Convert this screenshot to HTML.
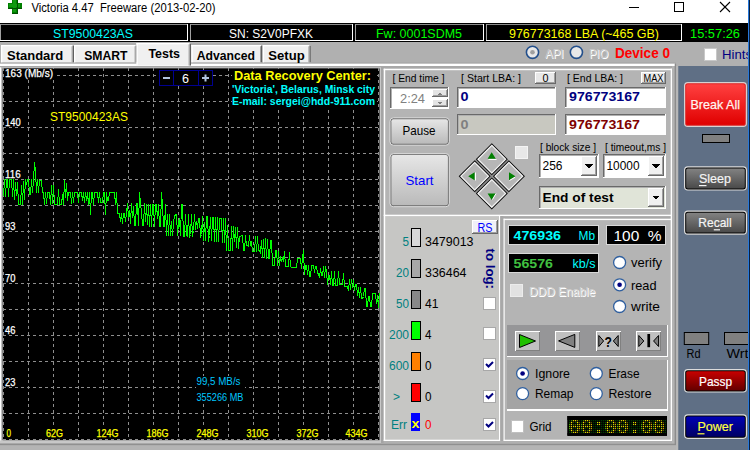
<!DOCTYPE html>
<html lang="en"><head><meta charset="utf-8"><title>Victoria 4.47 Freeware (2013-02-20)</title>
<style>
html,body{margin:0;padding:0;background:#ababab;}
body{width:750px;height:450px;overflow:hidden;}
svg{display:block;font-family:'Liberation Sans', Arial, sans-serif;}
svg text{white-space:pre;}
</style></head><body>
<svg width="750" height="450" viewBox="0 0 750 450">
<rect x="0" y="0" width="750" height="450" fill="#ababab" />
<rect x="0" y="0" width="750" height="23" fill="#ffffff" />
<rect x="0" y="23" width="750" height="19" fill="#000000" />
<g shape-rendering="crispEdges">
<rect x="12" y="0" width="6" height="14" fill="#008000" />
<rect x="8" y="3" width="14" height="6" fill="#008000" />
<rect x="13" y="0" width="3" height="12" fill="#109a10" />
<rect x="9" y="4" width="11" height="3" fill="#109a10" />
<rect x="17" y="0" width="1" height="14" fill="#005000" />
<rect x="8" y="8" width="14" height="1" fill="#005000" />
<rect x="12" y="13" width="6" height="1" fill="#005000" />
</g>
<text x="31.4" y="12" font-size="12" fill="#000" textLength="184" lengthAdjust="spacingAndGlyphs" xml:space="preserve">Victoria 4.47  Freeware (2013-02-20)</text>
<g stroke="#000" stroke-width="1" fill="none" shape-rendering="crispEdges">
<line x1="629" y1="7.5" x2="639" y2="7.5"/>
<rect x="674.5" y="2.5" width="9" height="9"/>
</g>
<g stroke="#000" stroke-width="1.1" fill="none"><line x1="720" y1="2" x2="730" y2="12"/><line x1="730" y1="2" x2="720" y2="12"/></g>
<g shape-rendering="crispEdges">
<rect x="0" y="24" width="188" height="1" fill="#8c8c8c" />
<rect x="0" y="24" width="1" height="17" fill="#a0a0a0" />
<rect x="0" y="40" width="188" height="1" fill="#ffffff" />
<rect x="187" y="24" width="1" height="17" fill="#ffffff" />
<rect x="190" y="24" width="163" height="1" fill="#8c8c8c" />
<rect x="190" y="24" width="1" height="17" fill="#a0a0a0" />
<rect x="190" y="40" width="163" height="1" fill="#ffffff" />
<rect x="352" y="24" width="1" height="17" fill="#ffffff" />
<rect x="355" y="24" width="129" height="1" fill="#8c8c8c" />
<rect x="355" y="24" width="1" height="17" fill="#a0a0a0" />
<rect x="355" y="40" width="129" height="1" fill="#ffffff" />
<rect x="483" y="24" width="1" height="17" fill="#ffffff" />
<rect x="486" y="24" width="196" height="1" fill="#8c8c8c" />
<rect x="486" y="24" width="1" height="17" fill="#a0a0a0" />
<rect x="486" y="40" width="196" height="1" fill="#ffffff" />
<rect x="681" y="24" width="1" height="17" fill="#ffffff" />
</g>
<text x="53" y="37.7" font-size="13.2" fill="#00ffff" textLength="80" lengthAdjust="spacingAndGlyphs" >ST9500423AS</text>
<text x="229" y="37.7" font-size="13.2" fill="#ffffff" textLength="84" lengthAdjust="spacingAndGlyphs" >SN: S2V0PFXK</text>
<text x="376" y="37.7" font-size="13.2" fill="#00ff00" textLength="86" lengthAdjust="spacingAndGlyphs" >Fw: 0001SDM5</text>
<text x="509" y="37.7" font-size="13.2" fill="#ffff00" textLength="150" lengthAdjust="spacingAndGlyphs" >976773168 LBA (~465 GB)</text>
<text x="690" y="37.7" font-size="13.2" fill="#00ff00" textLength="50" lengthAdjust="spacingAndGlyphs" >15:57:26</text>
<rect x="0" y="42" width="750" height="24" fill="#b0b0b0" />
<rect x="0" y="62.3" width="676" height="1.4" fill="#a8a8a8" />
<rect x="0" y="63.7" width="675" height="2.3" fill="#ffffff" />
<rect x="0" y="66" width="676" height="2" fill="#a8a8a8" />
<rect x="1" y="45" width="73" height="17.299999999999997" fill="#f0f0f0" />
<rect x="1" y="45" width="71.5" height="1.3" fill="#ffffff" />
<rect x="1" y="45" width="1.3" height="17.299999999999997" fill="#ffffff" />
<rect x="72.6" y="45.5" width="1.4" height="16.799999999999997" fill="#606060" />
<rect x="71.6" y="46.3" width="1" height="15.999999999999996" fill="#a0a0a0" />
<text x="7" y="59.7" font-size="12.5" fill="#000" font-weight="bold" textLength="56.3" lengthAdjust="spacingAndGlyphs" >Standard</text>
<rect x="74" y="45" width="63" height="17.299999999999997" fill="#f0f0f0" />
<rect x="74" y="45" width="61.5" height="1.3" fill="#ffffff" />
<rect x="74" y="45" width="1.3" height="17.299999999999997" fill="#ffffff" />
<rect x="135.6" y="45.5" width="1.4" height="16.799999999999997" fill="#606060" />
<rect x="134.6" y="46.3" width="1" height="15.999999999999996" fill="#a0a0a0" />
<text x="84.2" y="59.7" font-size="12.5" fill="#000" font-weight="bold" textLength="43.3" lengthAdjust="spacingAndGlyphs" >SMART</text>
<rect x="191.4" y="45" width="70.99999999999997" height="17.299999999999997" fill="#f0f0f0" />
<rect x="191.4" y="45" width="69.49999999999997" height="1.3" fill="#ffffff" />
<rect x="191.4" y="45" width="1.3" height="17.299999999999997" fill="#ffffff" />
<rect x="261.0" y="45.5" width="1.4" height="16.799999999999997" fill="#606060" />
<rect x="260.0" y="46.3" width="1" height="15.999999999999996" fill="#a0a0a0" />
<text x="196.7" y="59.7" font-size="12.5" fill="#000" font-weight="bold" textLength="58.3" lengthAdjust="spacingAndGlyphs" >Advanced</text>
<rect x="262.8" y="45" width="48.0" height="17.299999999999997" fill="#f0f0f0" />
<rect x="262.8" y="45" width="46.5" height="1.3" fill="#ffffff" />
<rect x="262.8" y="45" width="1.3" height="17.299999999999997" fill="#ffffff" />
<rect x="309.40000000000003" y="45.5" width="1.4" height="16.799999999999997" fill="#606060" />
<rect x="308.40000000000003" y="46.3" width="1" height="15.999999999999996" fill="#a0a0a0" />
<text x="268.3" y="59.7" font-size="12.5" fill="#000" font-weight="bold" textLength="36.4" lengthAdjust="spacingAndGlyphs" >Setup</text>
<rect x="136.5" y="43" width="54.5" height="22.5" fill="#f0f0f0" />
<rect x="136.5" y="43" width="53.0" height="1.3" fill="#ffffff" />
<rect x="136.5" y="43" width="1.3" height="22.5" fill="#ffffff" />
<rect x="189.6" y="43.5" width="1.4" height="22.0" fill="#606060" />
<rect x="188.6" y="44.3" width="1" height="21.2" fill="#a0a0a0" />
<text x="148.4" y="57.5" font-size="12.5" fill="#000" font-weight="bold" textLength="31.6" lengthAdjust="spacingAndGlyphs" >Tests</text>
<circle cx="532.5" cy="52.3" r="6.1" fill="#e8e8e8" stroke="#24508c" stroke-width="1.6"/>
<circle cx="532.5" cy="52.3" r="2.3" fill="#a0a0a0"/>
<circle cx="576.4" cy="52.3" r="6.1" fill="#e8e8e8" stroke="#24508c" stroke-width="1.6"/>
<text x="546" y="59" font-size="12" fill="#ffffff" textLength="18.5" lengthAdjust="spacingAndGlyphs" >API</text>
<text x="545" y="58" font-size="12" fill="#c8c8c8" textLength="18.5" lengthAdjust="spacingAndGlyphs" >API</text>
<text x="590" y="59" font-size="12" fill="#ffffff" textLength="19" lengthAdjust="spacingAndGlyphs" >PIO</text>
<text x="589" y="58" font-size="12" fill="#c8c8c8" textLength="19" lengthAdjust="spacingAndGlyphs" >PIO</text>
<text x="615" y="58" font-size="14" fill="#ff0000" font-weight="bold" textLength="55" lengthAdjust="spacingAndGlyphs" >Device 0</text>
<rect x="704.5" y="48.5" width="12" height="12" fill="#ffffff" stroke="#c8c8c8"/>
<text x="722" y="59" font-size="13" fill="#000080" textLength="30" lengthAdjust="spacingAndGlyphs" >Hints</text>
<rect x="0" y="67.3" width="1.3" height="376" fill="#ffffff" />
<rect x="1.3" y="67.3" width="1.5" height="376" fill="#c0c0c0" />
<rect x="2.7" y="67.3" width="378" height="1.2" fill="#c0c0c0" />
<rect x="2.7" y="68.4" width="377" height="372" fill="#000000" />
<rect x="0" y="440.3" width="381" height="2.7" fill="#c8c8c8" />
<rect x="379.7" y="67.3" width="1.3" height="375.7" fill="#c8c8c8" />
<rect x="381" y="67.3" width="2.7" height="376" fill="#a4a4a4" />
<rect x="0" y="443" width="676" height="1" fill="#b0b0b0" />
<rect x="0" y="443.8" width="676" height="1.5" fill="#909090" />
<rect x="0" y="445.3" width="678" height="4.7" fill="#b4b4b4" />
<g stroke="#8e8e8e" stroke-width="1" stroke-dasharray="3 3" shape-rendering="crispEdges">
<line x1="3" y1="75.5" x2="379.7" y2="75.5"/>
<line x1="3" y1="101.5" x2="379.7" y2="101.5"/>
<line x1="3" y1="127.5" x2="379.7" y2="127.5"/>
<line x1="3" y1="153.5" x2="379.7" y2="153.5"/>
<line x1="3" y1="179.5" x2="379.7" y2="179.5"/>
<line x1="3" y1="205.5" x2="379.7" y2="205.5"/>
<line x1="3" y1="231.5" x2="379.7" y2="231.5"/>
<line x1="3" y1="257.5" x2="379.7" y2="257.5"/>
<line x1="3" y1="283.5" x2="379.7" y2="283.5"/>
<line x1="3" y1="309.5" x2="379.7" y2="309.5"/>
<line x1="3" y1="335.5" x2="379.7" y2="335.5"/>
<line x1="3" y1="361.5" x2="379.7" y2="361.5"/>
<line x1="3" y1="387.5" x2="379.7" y2="387.5"/>
<line x1="3" y1="413.5" x2="379.7" y2="413.5"/>
<line x1="3" y1="439.5" x2="379.7" y2="439.5"/>
<line x1="3.5" y1="68" x2="3.5" y2="440.3"/>
<line x1="28.5" y1="68" x2="28.5" y2="440.3"/>
<line x1="53.5" y1="68" x2="53.5" y2="440.3"/>
<line x1="78.5" y1="68" x2="78.5" y2="440.3"/>
<line x1="103.5" y1="68" x2="103.5" y2="440.3"/>
<line x1="128.5" y1="68" x2="128.5" y2="440.3"/>
<line x1="153.5" y1="68" x2="153.5" y2="440.3"/>
<line x1="178.5" y1="68" x2="178.5" y2="440.3"/>
<line x1="203.5" y1="68" x2="203.5" y2="440.3"/>
<line x1="228.5" y1="68" x2="228.5" y2="440.3"/>
<line x1="253.5" y1="68" x2="253.5" y2="440.3"/>
<line x1="278.5" y1="68" x2="278.5" y2="440.3"/>
<line x1="303.5" y1="68" x2="303.5" y2="440.3"/>
<line x1="328.5" y1="68" x2="328.5" y2="440.3"/>
<line x1="353.5" y1="68" x2="353.5" y2="440.3"/>
<line x1="378.5" y1="68" x2="378.5" y2="440.3"/>
</g>
<polyline points="3.5,196.5 4.5,179.5 5.5,196.5 6.5,179.5 7.5,179.5 8.5,196.5 9.5,179.5 10.5,179.5 11.5,179.5 12.5,196.5 13.5,179.5 14.5,199.5 15.5,182.5 16.5,195.5 17.5,182.5 18.5,204.5 19.5,204.5 20.5,204.5 21.5,185.5 22.5,204.5 23.5,181.5 24.5,199.5 25.5,179.5 26.5,184.5 27.5,179.5 28.5,179.5 29.5,194.5 30.5,194.5 31.5,179.5 32.5,192.5 33.5,179.5 34.5,162.5 35.5,170.5 36.5,192.5 37.5,179.5 38.5,192.5 39.5,180.5 40.5,180.5 41.5,180.5 42.5,192.5 43.5,192.5 44.5,204.5 45.5,192.5 46.5,203.5 47.5,192.5 48.5,192.5 49.5,192.5 50.5,204.5 51.5,185.5 52.5,203.5 53.5,185.5 54.5,204.5 55.5,204.5 56.5,204.5 57.5,204.5 58.5,189.5 59.5,204.5 60.5,204.5 61.5,204.5 62.5,194.5 63.5,204.5 64.5,180.5 65.5,197.5 66.5,183.5 67.5,200.5 68.5,192.5 69.5,192.5 70.5,192.5 71.5,203.5 72.5,192.5 73.5,202.5 74.5,192.5 75.5,192.5 76.5,192.5 77.5,192.5 78.5,202.5 79.5,192.5 80.5,192.5 81.5,192.5 82.5,200.5 83.5,192.5 84.5,202.5 85.5,192.5 86.5,200.5 87.5,192.5 88.5,204.5 89.5,192.5 90.5,214.5 91.5,192.5 92.5,192.5 93.5,204.5 94.5,192.5 95.5,192.5 96.5,192.5 97.5,192.5 98.5,202.5 99.5,192.5 100.5,202.5 101.5,202.5 102.5,202.5 103.5,192.5 104.5,192.5 105.5,214.5 106.5,192.5 107.5,200.5 108.5,200.5 109.5,192.5 110.5,192.5 111.5,192.5 112.5,192.5 113.5,192.5 114.5,192.5 115.5,204.5 116.5,192.5 117.5,213.5 118.5,213.5 119.5,213.5 120.5,221.5 121.5,213.5 122.5,223.5 123.5,213.5 124.5,213.5 125.5,221.5 126.5,213.5 127.5,203.5 128.5,217.5 129.5,210.5 130.5,223.5 131.5,203.5 132.5,217.5 133.5,206.5 134.5,225.5 135.5,225.5 136.5,203.5 137.5,203.5 138.5,225.5 139.5,192.5 140.5,203.5 141.5,211.5 142.5,225.5 143.5,225.5 144.5,203.5 145.5,221.5 146.5,204.5 147.5,224.5 148.5,204.5 149.5,226.5 150.5,204.5 151.5,226.5 152.5,204.5 153.5,204.5 154.5,226.5 155.5,204.5 156.5,204.5 157.5,218.5 158.5,204.5 159.5,226.5 160.5,226.5 161.5,192.5 162.5,204.5 163.5,226.5 164.5,226.5 165.5,204.5 166.5,235.5 167.5,214.5 168.5,235.5 169.5,214.5 170.5,235.5 171.5,221.5 172.5,235.5 173.5,222.5 174.5,216.5 175.5,214.5 176.5,214.5 177.5,235.5 178.5,222.5 179.5,218.5 180.5,235.5 181.5,204.5 182.5,204.5 183.5,236.5 184.5,236.5 185.5,214.5 186.5,235.5 187.5,236.5 188.5,214.5 189.5,236.5 190.5,234.5 191.5,214.5 192.5,236.5 193.5,230.5 194.5,214.5 195.5,229.5 196.5,221.5 197.5,228.5 198.5,218.5 199.5,218.5 200.5,236.5 201.5,234.5 202.5,216.5 203.5,240.5 204.5,222.5 205.5,240.5 206.5,216.5 207.5,216.5 208.5,241.5 209.5,235.5 210.5,217.5 211.5,240.5 212.5,217.5 213.5,217.5 214.5,241.5 215.5,217.5 216.5,241.5 217.5,217.5 218.5,241.5 219.5,218.5 220.5,218.5 221.5,218.5 222.5,242.5 223.5,218.5 224.5,242.5 225.5,218.5 226.5,250.5 227.5,225.5 228.5,250.5 229.5,250.5 230.5,250.5 231.5,226.5 232.5,250.5 233.5,226.5 234.5,241.5 235.5,227.5 236.5,247.5 237.5,227.5 238.5,248.5 239.5,236.5 240.5,236.5 241.5,235.5 242.5,235.5 243.5,250.5 244.5,250.5 245.5,235.5 246.5,245.5 247.5,245.5 248.5,246.5 249.5,235.5 250.5,245.5 251.5,241.5 252.5,251.5 253.5,251.5 254.5,251.5 255.5,236.5 256.5,251.5 257.5,236.5 258.5,250.5 259.5,250.5 260.5,252.5 261.5,240.5 262.5,257.5 263.5,239.5 264.5,257.5 265.5,238.5 266.5,258.5 267.5,239.5 268.5,258.5 269.5,258.5 270.5,240.5 271.5,240.5 272.5,265.5 273.5,265.5 274.5,265.5 275.5,250.5 276.5,250.5 277.5,265.5 278.5,251.5 279.5,265.5 280.5,256.5 281.5,261.5 282.5,257.5 283.5,261.5 284.5,251.5 285.5,266.5 286.5,266.5 287.5,266.5 288.5,266.5 289.5,252.5 290.5,266.5 291.5,267.5 292.5,267.5 293.5,267.5 294.5,267.5 295.5,267.5 296.5,267.5 297.5,258.5 298.5,258.5 299.5,258.5 300.5,258.5 301.5,268.5 302.5,258.5 303.5,250.5 304.5,274.5 305.5,265.5 306.5,265.5 307.5,274.5 308.5,265.5 309.5,276.5 310.5,276.5 311.5,265.5 312.5,265.5 313.5,265.5 314.5,272.5 315.5,266.5 316.5,266.5 317.5,273.5 318.5,273.5 319.5,277.5 320.5,268.5 321.5,275.5 322.5,275.5 323.5,266.5 324.5,277.5 325.5,266.5 326.5,270.5 327.5,284.5 328.5,275.5 329.5,275.5 330.5,284.5 331.5,271.5 332.5,285.5 333.5,285.5 334.5,271.5 335.5,285.5 336.5,285.5 337.5,285.5 338.5,271.5 339.5,284.5 340.5,284.5 341.5,284.5 342.5,284.5 343.5,273.5 344.5,286.5 345.5,286.5 346.5,286.5 347.5,286.5 348.5,290.5 349.5,279.5 350.5,289.5 351.5,279.5 352.5,287.5 353.5,280.5 354.5,290.5 355.5,284.5 356.5,284.5 357.5,295.5 358.5,287.5 359.5,297.5 360.5,287.5 361.5,298.5 362.5,298.5 363.5,296.5 364.5,288.5 365.5,288.5 366.5,306.5 367.5,306.5 368.5,296.5 369.5,296.5 370.5,306.5 371.5,306.5 372.5,293.5 373.5,293.5 374.5,293.5 375.5,293.5 376.5,303.5 377.5,295.5 378.5,307.5 379.5,293.5" fill="none" stroke="#00ff00" stroke-width="1" shape-rendering="crispEdges"/>
<rect x="232" y="69" width="145" height="38" fill="#000" />
<rect x="4" y="69" width="50" height="10" fill="#000" />
<text x="5" y="126" font-size="10" fill="#ffffff" textLength="15.600000000000001" lengthAdjust="spacingAndGlyphs" stroke="#ffffff" stroke-width="0.25">140</text>
<text x="5" y="178" font-size="10" fill="#ffffff" textLength="15.600000000000001" lengthAdjust="spacingAndGlyphs" stroke="#ffffff" stroke-width="0.25">116</text>
<text x="5" y="230" font-size="10" fill="#ffffff" textLength="10.4" lengthAdjust="spacingAndGlyphs" stroke="#ffffff" stroke-width="0.25">93</text>
<text x="5" y="282" font-size="10" fill="#ffffff" textLength="10.4" lengthAdjust="spacingAndGlyphs" stroke="#ffffff" stroke-width="0.25">70</text>
<text x="5" y="334" font-size="10" fill="#ffffff" textLength="10.4" lengthAdjust="spacingAndGlyphs" stroke="#ffffff" stroke-width="0.25">46</text>
<text x="5" y="386" font-size="10" fill="#ffffff" textLength="10.4" lengthAdjust="spacingAndGlyphs" stroke="#ffffff" stroke-width="0.25">23</text>
<text x="5" y="77" font-size="10" fill="#ffffff" textLength="48" lengthAdjust="spacingAndGlyphs" stroke="#ffffff" stroke-width="0.25">163 (Mb/s)</text>
<rect x="5.5" y="428" width="6.5" height="11" fill="#000" />
<text x="6.5" y="437.3" font-size="10" fill="#ffff00" textLength="4.5" lengthAdjust="spacingAndGlyphs" stroke="#ffff00" stroke-width="0.25">0</text>
<rect x="45" y="428" width="19" height="11" fill="#000" />
<text x="46" y="437.3" font-size="10" fill="#ffff00" textLength="17" lengthAdjust="spacingAndGlyphs" stroke="#ffff00" stroke-width="0.25">62G</text>
<rect x="95.5" y="428" width="24" height="11" fill="#000" />
<text x="96.5" y="437.3" font-size="10" fill="#ffff00" textLength="22" lengthAdjust="spacingAndGlyphs" stroke="#ffff00" stroke-width="0.25">124G</text>
<rect x="145.5" y="428" width="24" height="11" fill="#000" />
<text x="146.5" y="437.3" font-size="10" fill="#ffff00" textLength="22" lengthAdjust="spacingAndGlyphs" stroke="#ffff00" stroke-width="0.25">186G</text>
<rect x="195.5" y="428" width="24" height="11" fill="#000" />
<text x="196.5" y="437.3" font-size="10" fill="#ffff00" textLength="22" lengthAdjust="spacingAndGlyphs" stroke="#ffff00" stroke-width="0.25">248G</text>
<rect x="245.5" y="428" width="24" height="11" fill="#000" />
<text x="246.5" y="437.3" font-size="10" fill="#ffff00" textLength="22" lengthAdjust="spacingAndGlyphs" stroke="#ffff00" stroke-width="0.25">310G</text>
<rect x="295.5" y="428" width="24" height="11" fill="#000" />
<text x="296.5" y="437.3" font-size="10" fill="#ffff00" textLength="22" lengthAdjust="spacingAndGlyphs" stroke="#ffff00" stroke-width="0.25">372G</text>
<rect x="344.5" y="428" width="24" height="11" fill="#000" />
<text x="345.5" y="437.3" font-size="10" fill="#ffff00" textLength="22" lengthAdjust="spacingAndGlyphs" stroke="#ffff00" stroke-width="0.25">434G</text>
<rect x="49" y="110" width="80" height="14" fill="#000" />
<text x="50" y="121" font-size="13" fill="#ffff00" textLength="78" lengthAdjust="spacingAndGlyphs" >ST9500423AS</text>
<rect x="196" y="376" width="49" height="27" fill="#000" />
<text x="196.5" y="385" font-size="10" fill="#00c8ff" textLength="44" lengthAdjust="spacingAndGlyphs" >99,5 MB/s</text>
<text x="196.5" y="401" font-size="10" fill="#00c8ff" textLength="47" lengthAdjust="spacingAndGlyphs" >355266 MB</text>
<text x="234" y="80.4" font-size="13" fill="#ffff00" font-weight="bold" textLength="137" lengthAdjust="spacingAndGlyphs" >Data Recovery Center:</text>
<text x="232" y="93.2" font-size="10" fill="#00ffff" font-weight="bold" textLength="143" lengthAdjust="spacingAndGlyphs" >'Victoria', Belarus, Minsk city</text>
<text x="232" y="105.3" font-size="10" fill="#00ffff" font-weight="bold" textLength="143" lengthAdjust="spacingAndGlyphs" >E-mail: sergei@hdd-911.com</text>
<g fill="#000" stroke="#000090" shape-rendering="crispEdges">
<rect x="159.5" y="70.5" width="14" height="15"/><rect x="173.5" y="70.5" width="25" height="15"/><rect x="198.5" y="70.5" width="14" height="15"/>
</g>
<rect x="163" y="77" width="7" height="2" fill="#b0c4de" />
<rect x="202" y="77" width="7" height="2" fill="#b0c4de" />
<rect x="204.5" y="74.5" width="2" height="7" fill="#b0c4de" />
<text x="182" y="83" font-size="13" fill="#ffffff" textLength="7" lengthAdjust="spacingAndGlyphs" >6</text>
<rect x="383.7" y="68.7" width="288.3" height="372.3" fill="#a8a8a8" />
<rect x="385" y="70" width="286" height="145" fill="#b4b4b4" />
<rect x="385" y="216" width="114.2" height="224" fill="#c6c6c4" />
<rect x="504.5" y="220" width="166.5" height="220" fill="#b4b4b4" />
<rect x="383.7" y="68.7" width="288.3" height="1.5" fill="#ffffff" />
<rect x="383.7" y="68.7" width="1.5" height="372.3" fill="#ffffff" />
<rect x="670.7" y="68.7" width="1.3" height="372.3" fill="#ffffff" />
<rect x="383.7" y="214.7" width="288.3" height="1.4" fill="#ffffff" />
<rect x="383.7" y="439.7" width="116.6" height="1.3" fill="#ffffff" />
<rect x="499" y="216" width="1.3" height="225" fill="#ffffff" />
<rect x="503.3" y="218.7" width="168.7" height="1.4" fill="#ffffff" />
<rect x="503.3" y="218.7" width="1.4" height="222.3" fill="#ffffff" />
<rect x="503.3" y="439.7" width="168.7" height="1.3" fill="#ffffff" />
<rect x="500.3" y="216.1" width="3" height="227" fill="#a8a8a8" />
<rect x="383.7" y="441" width="290" height="2" fill="#b0b0b0" />
<rect x="672" y="66" width="2.7" height="377" fill="#b4b4b4" />
<rect x="674.7" y="63.7" width="1.4" height="381" fill="#8c8c8c" />
<rect x="676.1" y="66" width="2.2" height="384" fill="#b8b8b8" />
<g shape-rendering="crispEdges">
<text x="392.5" y="82" font-size="11" fill="#000" textLength="52" lengthAdjust="spacingAndGlyphs" >[ End time ]</text>
<rect x="390" y="87" width="59" height="22" fill="#ffffff" />
<rect x="390" y="87" width="59" height="1" fill="#696969" />
<rect x="390" y="87" width="1" height="22" fill="#696969" />
<rect x="390" y="108" width="59" height="1" fill="#ffffff" />
<rect x="448" y="87" width="1" height="22" fill="#ffffff" />
<rect x="391" y="88" width="57" height="0.5" fill="#b0b0b0" />
<rect x="391" y="88" width="0.5" height="20" fill="#b0b0b0" />
<text x="400" y="103" font-size="13" fill="#808080" textLength="25" lengthAdjust="spacingAndGlyphs" >2:24</text>
<rect x="432" y="89" width="16" height="8" fill="#e4e4e4" />
<rect x="432" y="89" width="16" height="1" fill="#ffffff" />
<rect x="432" y="89" width="1" height="8" fill="#ffffff" />
<rect x="432" y="96" width="16" height="1" fill="#696969" />
<rect x="447" y="89" width="1" height="8" fill="#696969" />
<rect x="433" y="95" width="14" height="1" fill="#a0a0a0" />
<rect x="446" y="90" width="1" height="6" fill="#a0a0a0" />
<rect x="432" y="99" width="16" height="8" fill="#e4e4e4" />
<rect x="432" y="99" width="16" height="1" fill="#ffffff" />
<rect x="432" y="99" width="1" height="8" fill="#ffffff" />
<rect x="432" y="106" width="16" height="1" fill="#696969" />
<rect x="447" y="99" width="1" height="8" fill="#696969" />
<rect x="433" y="105" width="14" height="1" fill="#a0a0a0" />
<rect x="446" y="100" width="1" height="6" fill="#a0a0a0" />
<path d="M438 94.5 L440 92 L442 94.5Z M438 102 L440 104.5 L442 102Z" fill="#808080"/>
<text x="461" y="82" font-size="11" fill="#000" textLength="60" lengthAdjust="spacingAndGlyphs" >[ Start LBA: ]</text>
<rect x="535" y="72" width="21" height="12" fill="#e8e8e8" />
<rect x="535" y="72" width="21" height="1" fill="#ffffff" />
<rect x="535" y="72" width="1" height="12" fill="#ffffff" />
<rect x="535" y="83" width="21" height="1" fill="#696969" />
<rect x="555" y="72" width="1" height="12" fill="#696969" />
<rect x="536" y="82" width="19" height="1" fill="#a0a0a0" />
<rect x="554" y="73" width="1" height="10" fill="#a0a0a0" />
<text x="542.5" y="82" font-size="11" fill="#000" textLength="6" lengthAdjust="spacingAndGlyphs" >0</text>
<rect x="457" y="87" width="99" height="21" fill="#ffffff" />
<rect x="457" y="87" width="99" height="1" fill="#696969" />
<rect x="457" y="87" width="1" height="21" fill="#696969" />
<rect x="457" y="107" width="99" height="1" fill="#ffffff" />
<rect x="555" y="87" width="1" height="21" fill="#ffffff" />
<rect x="458" y="88" width="97" height="0.5" fill="#b0b0b0" />
<rect x="458" y="88" width="0.5" height="19" fill="#b0b0b0" />
<text x="460.5" y="101" font-size="12" fill="#000080" font-weight="bold" textLength="8" lengthAdjust="spacingAndGlyphs" >0</text>
<text x="567" y="82" font-size="11" fill="#000" textLength="56" lengthAdjust="spacingAndGlyphs" >[ End LBA: ]</text>
<rect x="641" y="72" width="25" height="12" fill="#e8e8e8" />
<rect x="641" y="72" width="25" height="1" fill="#ffffff" />
<rect x="641" y="72" width="1" height="12" fill="#ffffff" />
<rect x="641" y="83" width="25" height="1" fill="#696969" />
<rect x="665" y="72" width="1" height="12" fill="#696969" />
<rect x="642" y="82" width="23" height="1" fill="#a0a0a0" />
<rect x="664" y="73" width="1" height="10" fill="#a0a0a0" />
<text x="643.5" y="82" font-size="11" fill="#000" textLength="20" lengthAdjust="spacingAndGlyphs" >MAX</text>
<rect x="565" y="87" width="101" height="21" fill="#ffffff" />
<rect x="565" y="87" width="101" height="1" fill="#696969" />
<rect x="565" y="87" width="1" height="21" fill="#696969" />
<rect x="565" y="107" width="101" height="1" fill="#ffffff" />
<rect x="665" y="87" width="1" height="21" fill="#ffffff" />
<rect x="566" y="88" width="99" height="0.5" fill="#b0b0b0" />
<rect x="566" y="88" width="0.5" height="19" fill="#b0b0b0" />
<text x="569" y="101" font-size="12" fill="#000080" font-weight="bold" textLength="71" lengthAdjust="spacingAndGlyphs" >976773167</text>
<rect x="457" y="114" width="99" height="21" fill="#c8c8c0" />
<rect x="457" y="114" width="99" height="1" fill="#696969" />
<rect x="457" y="114" width="1" height="21" fill="#696969" />
<rect x="457" y="134" width="99" height="1" fill="#ffffff" />
<rect x="555" y="114" width="1" height="21" fill="#ffffff" />
<rect x="458" y="115" width="97" height="0.5" fill="#b0b0b0" />
<rect x="458" y="115" width="0.5" height="19" fill="#b0b0b0" />
<text x="460.5" y="128.6" font-size="12" fill="#808080" font-weight="bold" textLength="8" lengthAdjust="spacingAndGlyphs" >0</text>
<rect x="565" y="114" width="101" height="21" fill="#ffffff" />
<rect x="565" y="114" width="101" height="1" fill="#696969" />
<rect x="565" y="114" width="1" height="21" fill="#696969" />
<rect x="565" y="134" width="101" height="1" fill="#ffffff" />
<rect x="665" y="114" width="1" height="21" fill="#ffffff" />
<rect x="566" y="115" width="99" height="0.5" fill="#b0b0b0" />
<rect x="566" y="115" width="0.5" height="19" fill="#b0b0b0" />
<text x="569" y="128.6" font-size="12" fill="#800000" font-weight="bold" textLength="71" lengthAdjust="spacingAndGlyphs" >976773167</text>
</g>
<linearGradient id="gp" x1="0" y1="0" x2="0" y2="1"><stop offset="0" stop-color="#e6e6e6"/><stop offset="1" stop-color="#bababa"/></linearGradient>
<rect x="390.0" y="117.8" width="59.3" height="27.4" rx="3.4" fill="#6a6a6a" stroke="#e0e0e0" stroke-width="1"/>
<rect x="391.4" y="119.2" width="56.5" height="24.599999999999998" rx="2" fill="url(#gp)"/>
<text x="402.5" y="135.3" font-size="13" fill="#000" textLength="33" lengthAdjust="spacingAndGlyphs" >Pause</text>
<linearGradient id="gs" x1="0" y1="0" x2="0" y2="1"><stop offset="0" stop-color="#e6e6e6"/><stop offset="1" stop-color="#bababa"/></linearGradient>
<rect x="390.0" y="153.7" width="59.3" height="53" rx="3.4" fill="#6a6a6a" stroke="#e0e0e0" stroke-width="1"/>
<rect x="391.4" y="155.1" width="56.5" height="50.2" rx="2" fill="url(#gs)"/>
<text x="405.5" y="185" font-size="13" fill="#0000ff" textLength="28" lengthAdjust="spacingAndGlyphs" >Start</text>
<g transform="translate(491.8 176.3) rotate(45)">
<rect x="-23.4" y="-23.4" width="46.8" height="46.8" fill="#8c8c8c" />
<rect x="-22.90" y="-22.90" width="21.60" height="21.60" fill="#b6b6b6" stroke="#101010" stroke-width="1"/>
<rect x="-21.80" y="-21.80" width="19.40" height="19.40" fill="none" stroke="#f4f4f4" stroke-width="1.1"/>
<rect x="1.30" y="-22.90" width="21.60" height="21.60" fill="#b6b6b6" stroke="#101010" stroke-width="1"/>
<rect x="2.40" y="-21.80" width="19.40" height="19.40" fill="none" stroke="#f4f4f4" stroke-width="1.1"/>
<rect x="-22.90" y="1.30" width="21.60" height="21.60" fill="#b6b6b6" stroke="#101010" stroke-width="1"/>
<rect x="-21.80" y="2.40" width="19.40" height="19.40" fill="none" stroke="#f4f4f4" stroke-width="1.1"/>
<rect x="1.30" y="1.30" width="21.60" height="21.60" fill="#b6b6b6" stroke="#101010" stroke-width="1"/>
<rect x="2.40" y="2.40" width="19.40" height="19.40" fill="none" stroke="#f4f4f4" stroke-width="1.1"/>
</g>
<path d="M487.6 158.8 L491.7 152.3 L495.8 158.8Z M487.6 193.6 L491.7 200.1 L495.8 193.6Z M474.6 172.2 L468.2 176.2 L474.6 180.2Z M509 172.2 L515.4 176.2 L509 180.2Z" fill="#008000"/>
<path d="M488.5 159.5 H496.5 M496 193.5 L492.5 199.5 M475.5 172.5 V180.5 M509.5 180.5 L515 177.3" fill="none" stroke="#ffffff" stroke-width="1"/>
<rect x="515.5" y="146.5" width="12" height="12" fill="#e8e8e8" stroke="#f4f4f4"/>
<g shape-rendering="crispEdges">
<text x="540" y="151" font-size="11" fill="#000" textLength="56" lengthAdjust="spacingAndGlyphs" >[ block size ]</text>
<text x="605" y="151" font-size="11" fill="#000" textLength="61" lengthAdjust="spacingAndGlyphs" >[ timeout,ms ]</text>
<rect x="539" y="154" width="60" height="24" fill="#ffffff" />
<rect x="539" y="154" width="60" height="1" fill="#696969" />
<rect x="539" y="154" width="1" height="24" fill="#696969" />
<rect x="539" y="177" width="60" height="1" fill="#ffffff" />
<rect x="598" y="154" width="1" height="24" fill="#ffffff" />
<rect x="540" y="155" width="58" height="0.5" fill="#b0b0b0" />
<rect x="540" y="155" width="0.5" height="22" fill="#b0b0b0" />
<rect x="581" y="156" width="16" height="20" fill="#f0f0f0" />
<rect x="581" y="156" width="16" height="1" fill="#ffffff" />
<rect x="581" y="156" width="1" height="20" fill="#ffffff" />
<rect x="581" y="175" width="16" height="1" fill="#696969" />
<rect x="596" y="156" width="1" height="20" fill="#696969" />
<rect x="582" y="174" width="14" height="1" fill="#a0a0a0" />
<rect x="595" y="157" width="1" height="18" fill="#a0a0a0" />
<path d="M585 164.0 L593 164.0 L589 168.5Z" fill="#000"/>
<text x="542.5" y="170" font-size="12" fill="#000" textLength="20" lengthAdjust="spacingAndGlyphs" >256</text>
<rect x="603" y="154" width="63" height="24" fill="#ffffff" />
<rect x="603" y="154" width="63" height="1" fill="#696969" />
<rect x="603" y="154" width="1" height="24" fill="#696969" />
<rect x="603" y="177" width="63" height="1" fill="#ffffff" />
<rect x="665" y="154" width="1" height="24" fill="#ffffff" />
<rect x="604" y="155" width="61" height="0.5" fill="#b0b0b0" />
<rect x="604" y="155" width="0.5" height="22" fill="#b0b0b0" />
<rect x="648" y="156" width="16" height="20" fill="#f0f0f0" />
<rect x="648" y="156" width="16" height="1" fill="#ffffff" />
<rect x="648" y="156" width="1" height="20" fill="#ffffff" />
<rect x="648" y="175" width="16" height="1" fill="#696969" />
<rect x="663" y="156" width="1" height="20" fill="#696969" />
<rect x="649" y="174" width="14" height="1" fill="#a0a0a0" />
<rect x="662" y="157" width="1" height="18" fill="#a0a0a0" />
<path d="M652 164.0 L660 164.0 L656 168.5Z" fill="#000"/>
<text x="606.5" y="170" font-size="12" fill="#000" textLength="33" lengthAdjust="spacingAndGlyphs" >10000</text>
<rect x="539" y="186" width="127" height="23" fill="#e0e4d8" />
<rect x="539" y="186" width="127" height="1" fill="#696969" />
<rect x="539" y="186" width="1" height="23" fill="#696969" />
<rect x="539" y="208" width="127" height="1" fill="#ffffff" />
<rect x="665" y="186" width="1" height="23" fill="#ffffff" />
<rect x="540" y="187" width="125" height="0.5" fill="#b0b0b0" />
<rect x="540" y="187" width="0.5" height="21" fill="#b0b0b0" />
<rect x="648" y="188" width="16" height="19" fill="#f0f0f0" />
<rect x="648" y="188" width="16" height="1" fill="#ffffff" />
<rect x="648" y="188" width="1" height="19" fill="#ffffff" />
<rect x="648" y="206" width="16" height="1" fill="#696969" />
<rect x="663" y="188" width="1" height="19" fill="#696969" />
<rect x="649" y="205" width="14" height="1" fill="#a0a0a0" />
<rect x="662" y="189" width="1" height="17" fill="#a0a0a0" />
<path d="M652 195.5 L660 195.5 L656 200.0Z" fill="#000"/>
<text x="542.5" y="202" font-size="13" fill="#000" font-weight="bold" textLength="71" lengthAdjust="spacingAndGlyphs" >End of test</text>
</g>
<g shape-rendering="crispEdges">
<rect x="472" y="220" width="26" height="14" fill="#f0f0f8" />
<rect x="472" y="220" width="26" height="1" fill="#ffffff" />
<rect x="472" y="220" width="1" height="14" fill="#ffffff" />
<rect x="472" y="233" width="26" height="1" fill="#696969" />
<rect x="497" y="220" width="1" height="14" fill="#696969" />
<rect x="473" y="232" width="24" height="1" fill="#a0a0a0" />
<rect x="496" y="221" width="1" height="12" fill="#a0a0a0" />
<text x="477.5" y="232" font-size="12" fill="#0000ff" textLength="15" lengthAdjust="spacingAndGlyphs" >RS</text>
<rect x="411" y="228" width="10" height="19" fill="#000" />
<rect x="412" y="229" width="8" height="17" fill="#d8d8d8" />
<text x="402.5" y="245.5" font-size="12.5" fill="#008080" textLength="6.5" lengthAdjust="spacingAndGlyphs" >5</text>
<text x="425" y="245.5" font-size="12.5" fill="#000" textLength="48.5" lengthAdjust="spacingAndGlyphs" >3479013</text>
<rect x="411" y="259" width="10" height="19" fill="#000" />
<rect x="412" y="260" width="8" height="17" fill="#a8a8a8" />
<text x="396" y="276.5" font-size="12.5" fill="#008080" textLength="13" lengthAdjust="spacingAndGlyphs" >20</text>
<text x="425" y="276.5" font-size="12.5" fill="#000" textLength="41.5" lengthAdjust="spacingAndGlyphs" >336464</text>
<rect x="411" y="290" width="10" height="19" fill="#000" />
<rect x="412" y="291" width="8" height="17" fill="#888888" />
<text x="396" y="307.5" font-size="12.5" fill="#008080" textLength="13" lengthAdjust="spacingAndGlyphs" >50</text>
<text x="425" y="307.5" font-size="12.5" fill="#000" textLength="13.5" lengthAdjust="spacingAndGlyphs" >41</text>
<rect x="411" y="321" width="10" height="19" fill="#000" />
<rect x="412" y="322" width="8" height="17" fill="#00ff00" />
<text x="389" y="338.5" font-size="12.5" fill="#008080" textLength="20" lengthAdjust="spacingAndGlyphs" >200</text>
<text x="425" y="338.5" font-size="12.5" fill="#000" textLength="6.5" lengthAdjust="spacingAndGlyphs" >4</text>
<rect x="411" y="352" width="10" height="19" fill="#000" />
<rect x="412" y="353" width="8" height="17" fill="#ff8000" />
<text x="389" y="369.5" font-size="12.5" fill="#008080" textLength="20" lengthAdjust="spacingAndGlyphs" >600</text>
<text x="425" y="369.5" font-size="12.5" fill="#000" textLength="6.5" lengthAdjust="spacingAndGlyphs" >0</text>
<rect x="411" y="383" width="10" height="19" fill="#000" />
<rect x="412" y="384" width="8" height="17" fill="#ff0000" />
<text x="393" y="400.5" font-size="12.5" fill="#008080" textLength="7" lengthAdjust="spacingAndGlyphs" >&gt;</text>
<text x="425" y="400.5" font-size="12.5" fill="#000" textLength="6.5" lengthAdjust="spacingAndGlyphs" >0</text>
<rect x="411" y="413" width="9" height="18" fill="#0000ff" />
<text x="411.5" y="428" font-size="12" fill="#ffff00" font-weight="bold" textLength="8" lengthAdjust="spacingAndGlyphs" >x</text>
<text x="391" y="429" font-size="12.5" fill="#008080" textLength="16" lengthAdjust="spacingAndGlyphs" >Err</text>
<text x="425" y="429" font-size="12.5" fill="#ff0000" textLength="6.5" lengthAdjust="spacingAndGlyphs" >0</text>
<rect x="483.5" y="297.5" width="12" height="12" fill="#ffffff" stroke="#a8a8a8"/>
<rect x="483.5" y="327.5" width="12" height="12" fill="#ffffff" stroke="#a8a8a8"/>
<rect x="483.5" y="358.5" width="12" height="12" fill="#ffffff" stroke="#a8a8a8"/>
<path d="M486 364.0 L488.5 366.5 L493 362.0" fill="none" stroke="#000080" stroke-width="2" shape-rendering="geometricPrecision"/>
<rect x="483.5" y="390" width="12" height="12" fill="#ffffff" stroke="#a8a8a8"/>
<path d="M486 395.5 L488.5 398 L493 393.5" fill="none" stroke="#000080" stroke-width="2" shape-rendering="geometricPrecision"/>
<rect x="483.5" y="418.5" width="12" height="12" fill="#ffffff" stroke="#a8a8a8"/>
<path d="M486 424.0 L488.5 426.5 L493 422.0" fill="none" stroke="#000080" stroke-width="2" shape-rendering="geometricPrecision"/>
</g>
<text transform="translate(486 248.5) rotate(90)" font-size="12.5" font-weight="bold" fill="#000080" textLength="40.5" lengthAdjust="spacingAndGlyphs">to log:</text>
<g shape-rendering="crispEdges">
<rect x="508" y="225" width="91" height="20" fill="#d8d8d8" />
<rect x="509" y="226" width="89" height="18" fill="#000" />
<rect x="606" y="225" width="60" height="20" fill="#d8d8d8" />
<rect x="607" y="226" width="58" height="18" fill="#000" />
<rect x="508" y="253" width="91" height="20" fill="#d8d8d8" />
<rect x="509" y="254" width="89" height="18" fill="#000" />
<text x="513.5" y="240" font-size="12.5" fill="#00ffff" font-weight="bold" textLength="47.5" lengthAdjust="spacingAndGlyphs" >476936</text>
<text x="578.5" y="240" font-size="12.5" fill="#00ffff" textLength="16.5" lengthAdjust="spacingAndGlyphs" >Mb</text>
<text x="613.5" y="241" font-size="14.5" fill="#ffffff" textLength="48" lengthAdjust="spacingAndGlyphs" xml:space="preserve">100  %</text>
<text x="513.5" y="268" font-size="12.5" fill="#40c040" font-weight="bold" textLength="39.5" lengthAdjust="spacingAndGlyphs" >56576</text>
<text x="572.5" y="268" font-size="12.5" fill="#00ffff" textLength="23" lengthAdjust="spacingAndGlyphs" >kb/s</text>
</g>
<circle cx="619.6" cy="262.5" r="6" fill="#ffffff" stroke="#2f5f9f" stroke-width="1.3"/>
<text x="631" y="267.4" font-size="13" fill="#000" textLength="31" lengthAdjust="spacingAndGlyphs" >verify</text>
<circle cx="619.6" cy="284.8" r="6" fill="#ffffff" stroke="#2f5f9f" stroke-width="1.3"/>
<circle cx="619.6" cy="284.8" r="2.3" fill="#000080"/>
<text x="631" y="289.5" font-size="13" fill="#000" textLength="25.5" lengthAdjust="spacingAndGlyphs" >read</text>
<circle cx="619.6" cy="306.5" r="6" fill="#ffffff" stroke="#2f5f9f" stroke-width="1.3"/>
<text x="631" y="311.4" font-size="13" fill="#000" textLength="29" lengthAdjust="spacingAndGlyphs" >write</text>
<rect x="510.5" y="284.5" width="12" height="12" fill="#e2e2e2" stroke="#ececec"/>
<text x="530" y="297.2" font-size="12.5" fill="#ffffff" textLength="66" lengthAdjust="spacingAndGlyphs" >DDD Enable</text>
<text x="529" y="296.2" font-size="12.5" fill="#d0d0d0" textLength="66" lengthAdjust="spacingAndGlyphs" >DDD Enable</text>
<g shape-rendering="crispEdges">
<rect x="506.7" y="325" width="161.3" height="31.6" fill="#ffffff" />
<rect x="506.7" y="325" width="160.2" height="30.5" fill="#969698" />
<rect x="515" y="331" width="25" height="20" fill="#ffffff" />
<rect x="516" y="332" width="24" height="19" fill="#808080" />
<rect x="516" y="332" width="23" height="18" fill="#c0c0c0" />
<rect x="555" y="331" width="25" height="20" fill="#ffffff" />
<rect x="556" y="332" width="24" height="19" fill="#808080" />
<rect x="556" y="332" width="23" height="18" fill="#c0c0c0" />
<rect x="596" y="331" width="25" height="20" fill="#ffffff" />
<rect x="597" y="332" width="24" height="19" fill="#808080" />
<rect x="597" y="332" width="23" height="18" fill="#c0c0c0" />
<rect x="636" y="331" width="25" height="20" fill="#ffffff" />
<rect x="637" y="332" width="24" height="19" fill="#808080" />
<rect x="637" y="332" width="23" height="18" fill="#c0c0c0" />
</g>
<path d="M519.5 334.5 L535.5 341 L519.5 347.5Z" fill="#20c000" stroke="#000" stroke-width="1"/>
<path d="M574.8 334.4 L558.6 340.9 L574.8 347.4Z" fill="#808080" stroke="#000" stroke-width="1"/>
<path d="M598.8 335.5 L603.6 341 L598.8 346.5Z M618.2 335.5 L613.4 341 L618.2 346.5Z" fill="#808080" stroke="#000" stroke-width="1"/>
<text x="604.6" y="346.6" font-size="15.5" fill="#000" font-weight="bold" textLength="7.4" lengthAdjust="spacingAndGlyphs" >?</text>
<path d="M638.8 335.5 L643.8 341 L638.8 346.5Z M658.6 335.5 L653.6 341 L658.6 346.5Z" fill="#808080" stroke="#000" stroke-width="1"/>
<rect x="647.4" y="334" width="2.7" height="13.2" fill="#000" />
<g shape-rendering="crispEdges">
<rect x="506.7" y="360" width="161.3" height="50.6" fill="#ffffff" />
<rect x="506.7" y="360" width="160.2" height="49.4" fill="#a4a4a4" />
</g>
<circle cx="522.6" cy="373.5" r="6" fill="#ffffff" stroke="#2f5f9f" stroke-width="1.3"/>
<circle cx="522.6" cy="373.5" r="2.3" fill="#000080"/>
<text x="535" y="378" font-size="13" fill="#000" textLength="35" lengthAdjust="spacingAndGlyphs" >Ignore</text>
<circle cx="596.3" cy="373.5" r="6" fill="#ffffff" stroke="#2f5f9f" stroke-width="1.3"/>
<text x="608.5" y="378" font-size="13" fill="#000" textLength="31" lengthAdjust="spacingAndGlyphs" >Erase</text>
<circle cx="522.6" cy="393.6" r="6" fill="#ffffff" stroke="#2f5f9f" stroke-width="1.3"/>
<text x="535" y="398" font-size="13" fill="#000" textLength="38.5" lengthAdjust="spacingAndGlyphs" >Remap</text>
<circle cx="596.3" cy="393.6" r="6" fill="#ffffff" stroke="#2f5f9f" stroke-width="1.3"/>
<text x="608.5" y="398" font-size="13" fill="#000" textLength="43" lengthAdjust="spacingAndGlyphs" >Restore</text>
<rect x="511.5" y="420.5" width="12" height="12" fill="#ffffff" stroke="#c0c0c0"/>
<text x="529.5" y="431" font-size="13" fill="#000" textLength="22" lengthAdjust="spacingAndGlyphs" >Grid</text>
<rect x="567.5" y="416" width="99.5" height="19.7" fill="#000" />
<rect x="569" y="420" width="97" height="13" fill="#003a00" />
<text x="568.4" y="433.4" font-size="20" font-family="'Liberation Mono', monospace" fill="#f4e400" stroke="#f4e400" stroke-width="0.7">00:00:00</text>
<g stroke="#000" stroke-width="0.78">
<line x1="570.5" y1="417" x2="570.5" y2="435"/>
<line x1="572.5" y1="417" x2="572.5" y2="435"/>
<line x1="574.5" y1="417" x2="574.5" y2="435"/>
<line x1="576.5" y1="417" x2="576.5" y2="435"/>
<line x1="578.5" y1="417" x2="578.5" y2="435"/>
<line x1="580.5" y1="417" x2="580.5" y2="435"/>
<line x1="582.5" y1="417" x2="582.5" y2="435"/>
<line x1="584.5" y1="417" x2="584.5" y2="435"/>
<line x1="586.5" y1="417" x2="586.5" y2="435"/>
<line x1="588.5" y1="417" x2="588.5" y2="435"/>
<line x1="590.5" y1="417" x2="590.5" y2="435"/>
<line x1="592.5" y1="417" x2="592.5" y2="435"/>
<line x1="594.5" y1="417" x2="594.5" y2="435"/>
<line x1="596.5" y1="417" x2="596.5" y2="435"/>
<line x1="598.5" y1="417" x2="598.5" y2="435"/>
<line x1="600.5" y1="417" x2="600.5" y2="435"/>
<line x1="602.5" y1="417" x2="602.5" y2="435"/>
<line x1="604.5" y1="417" x2="604.5" y2="435"/>
<line x1="606.5" y1="417" x2="606.5" y2="435"/>
<line x1="608.5" y1="417" x2="608.5" y2="435"/>
<line x1="610.5" y1="417" x2="610.5" y2="435"/>
<line x1="612.5" y1="417" x2="612.5" y2="435"/>
<line x1="614.5" y1="417" x2="614.5" y2="435"/>
<line x1="616.5" y1="417" x2="616.5" y2="435"/>
<line x1="618.5" y1="417" x2="618.5" y2="435"/>
<line x1="620.5" y1="417" x2="620.5" y2="435"/>
<line x1="622.5" y1="417" x2="622.5" y2="435"/>
<line x1="624.5" y1="417" x2="624.5" y2="435"/>
<line x1="626.5" y1="417" x2="626.5" y2="435"/>
<line x1="628.5" y1="417" x2="628.5" y2="435"/>
<line x1="630.5" y1="417" x2="630.5" y2="435"/>
<line x1="632.5" y1="417" x2="632.5" y2="435"/>
<line x1="634.5" y1="417" x2="634.5" y2="435"/>
<line x1="636.5" y1="417" x2="636.5" y2="435"/>
<line x1="638.5" y1="417" x2="638.5" y2="435"/>
<line x1="640.5" y1="417" x2="640.5" y2="435"/>
<line x1="642.5" y1="417" x2="642.5" y2="435"/>
<line x1="644.5" y1="417" x2="644.5" y2="435"/>
<line x1="646.5" y1="417" x2="646.5" y2="435"/>
<line x1="648.5" y1="417" x2="648.5" y2="435"/>
<line x1="650.5" y1="417" x2="650.5" y2="435"/>
<line x1="652.5" y1="417" x2="652.5" y2="435"/>
<line x1="654.5" y1="417" x2="654.5" y2="435"/>
<line x1="656.5" y1="417" x2="656.5" y2="435"/>
<line x1="658.5" y1="417" x2="658.5" y2="435"/>
<line x1="660.5" y1="417" x2="660.5" y2="435"/>
<line x1="662.5" y1="417" x2="662.5" y2="435"/>
<line x1="664.5" y1="417" x2="664.5" y2="435"/>
<line x1="568" y1="417.5" x2="666" y2="417.5"/>
<line x1="568" y1="419.5" x2="666" y2="419.5"/>
<line x1="568" y1="421.5" x2="666" y2="421.5"/>
<line x1="568" y1="423.5" x2="666" y2="423.5"/>
<line x1="568" y1="425.5" x2="666" y2="425.5"/>
<line x1="568" y1="427.5" x2="666" y2="427.5"/>
<line x1="568" y1="429.5" x2="666" y2="429.5"/>
<line x1="568" y1="431.5" x2="666" y2="431.5"/>
<line x1="568" y1="433.5" x2="666" y2="433.5"/>
<line x1="568" y1="435.5" x2="666" y2="435.5"/>
</g>
<rect x="567.5" y="433" width="99.5" height="2.7" fill="#000" />
<rect x="567.5" y="416" width="99.5" height="4" fill="#000" />
<rect x="567.5" y="416" width="1.5" height="19.7" fill="#000" />
<rect x="666" y="416" width="1" height="19.7" fill="#000" />
<rect x="678.3" y="66" width="69.7" height="384" fill="#5f6f85" />
<linearGradient id="gb" x1="0" y1="0" x2="0" y2="1"><stop offset="0" stop-color="#ff4040"/><stop offset="1" stop-color="#e00000"/></linearGradient>
<rect x="684.6" y="82.6" width="61.8" height="43.8" rx="3.2" fill="#e02020" stroke="#d8d0d0" stroke-width="1.2"/>
<rect x="686.2" y="84.2" width="58.6" height="40.6" rx="1.6" fill="url(#gb)"/>
<text x="690.5" y="108.5" font-size="13" fill="#fff4f0" textLength="49.5" lengthAdjust="spacingAndGlyphs" stroke="#fff4f0" stroke-width="0.25">Break All</text>
<rect x="702.5" y="134.5" width="27" height="8" fill="#808080" stroke="#000"/>
<linearGradient id="gsl" x1="0" y1="0" x2="0" y2="1"><stop offset="0" stop-color="#828282"/><stop offset="1" stop-color="#4a4a4a"/></linearGradient>
<rect x="684.6" y="166.9" width="61.8" height="23.1" rx="3.2" fill="#000000" stroke="#dcdcdc" stroke-width="1.2"/>
<rect x="686.2" y="168.5" width="58.6" height="19.9" rx="1.6" fill="url(#gsl)"/>
<text x="699" y="183" font-size="13" fill="#f4f4f4" textLength="32" lengthAdjust="spacingAndGlyphs" stroke="#f4f4f4" stroke-width="0.2">Sleep</text>
<rect x="699" y="185" width="7.5" height="1.2" fill="#f4f4f4" />
<linearGradient id="grc" x1="0" y1="0" x2="0" y2="1"><stop offset="0" stop-color="#828282"/><stop offset="1" stop-color="#4a4a4a"/></linearGradient>
<rect x="684.6" y="211.1" width="61.8" height="23.1" rx="3.2" fill="#000000" stroke="#dcdcdc" stroke-width="1.2"/>
<rect x="686.2" y="212.7" width="58.6" height="19.9" rx="1.6" fill="url(#grc)"/>
<text x="698.3" y="227.2" font-size="13" fill="#f4f4f4" textLength="33.4" lengthAdjust="spacingAndGlyphs" stroke="#f4f4f4" stroke-width="0.2">Recall</text>
<rect x="713.8" y="229.2" width="6.2" height="1.2" fill="#f4f4f4" />
<rect x="684.3" y="332.5" width="24.4" height="12" fill="#808080" stroke="#000"/>
<rect x="724.5" y="332.5" width="24" height="12" fill="#808080" stroke="#000"/>
<text x="686.5" y="357.5" font-size="12.5" fill="#000" textLength="14" lengthAdjust="spacingAndGlyphs" >Rd</text>
<text x="726.5" y="357.5" font-size="12.5" fill="#000" textLength="22" lengthAdjust="spacingAndGlyphs" >Wrt</text>
<linearGradient id="gpa" x1="0" y1="0" x2="0" y2="1"><stop offset="0" stop-color="#c80000"/><stop offset="1" stop-color="#640000"/></linearGradient>
<rect x="684.6" y="369.6" width="61.8" height="22.400000000000002" rx="3.2" fill="#000000" stroke="#dcdcdc" stroke-width="1.2"/>
<rect x="686.2" y="371.2" width="58.6" height="19.200000000000003" rx="1.6" fill="url(#gpa)"/>
<text x="699" y="385.5" font-size="13" fill="#ffffff" textLength="33" lengthAdjust="spacingAndGlyphs" stroke="#ffffff" stroke-width="0.2">Passp</text>
<linearGradient id="gpw" x1="0" y1="0" x2="0" y2="1"><stop offset="0" stop-color="#0000b4"/><stop offset="1" stop-color="#000064"/></linearGradient>
<rect x="684.6" y="414.90000000000003" width="61.8" height="23.400000000000002" rx="3.2" fill="#000000" stroke="#dcdcdc" stroke-width="1.2"/>
<rect x="686.2" y="416.5" width="58.6" height="20.200000000000003" rx="1.6" fill="url(#gpw)"/>
<text x="697.5" y="431.3" font-size="13" fill="#ffff40" textLength="35.5" lengthAdjust="spacingAndGlyphs" stroke="#ffff40" stroke-width="0.2">Power</text>
<rect x="697.5" y="433.2" width="7" height="1.2" fill="#ffff40" />
<rect x="748" y="0" width="1" height="450" fill="#2878d8" />
<rect x="749" y="0" width="1" height="450" fill="#0a2040" />
</svg>
</body></html>
